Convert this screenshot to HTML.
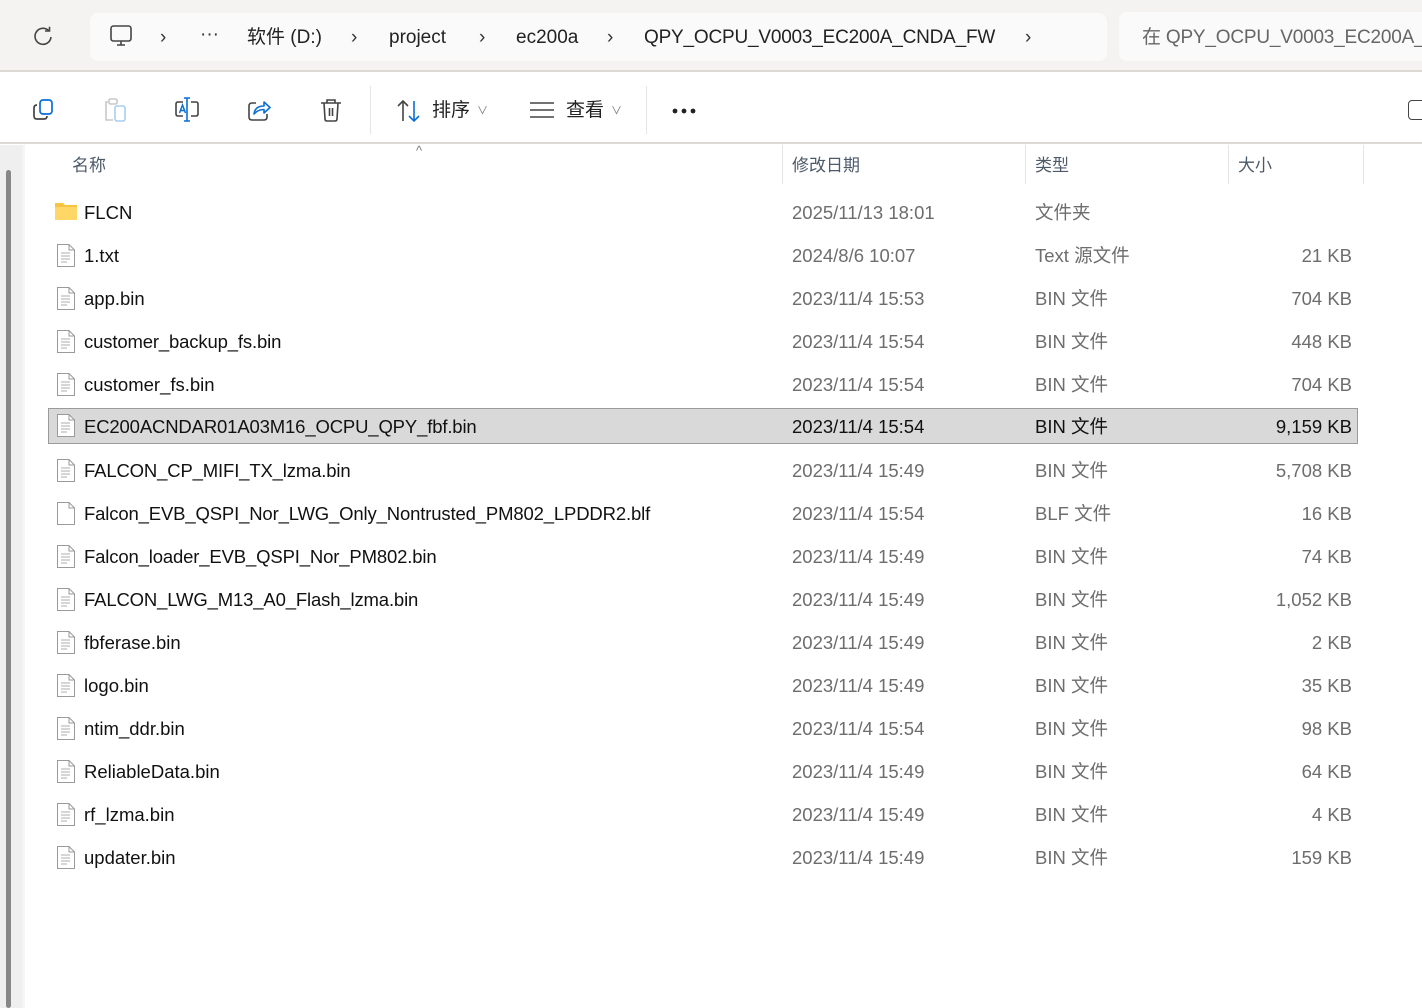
<!DOCTYPE html>
<html><head><meta charset="utf-8"><style>
*{margin:0;padding:0;box-sizing:border-box}
body{width:1422px;height:1008px;overflow:hidden;background:#fff;font-family:"Liberation Sans","Noto Sans CJK SC",sans-serif;position:relative;color:#1a1a1a}
.abs{position:absolute}
#top{left:0;top:0;width:1422px;height:72px;background:#f4f3f2;border-bottom:2px solid #dcd8d4}
#crumb{left:90px;top:13px;width:1017px;height:48px;background:#fafafa;border-radius:8px}
#search{left:1119px;top:12px;width:320px;height:49px;background:#fafafa;border-radius:8px}
.t{position:absolute;white-space:nowrap;font-size:19px;line-height:24px}
#tb{left:0;top:74px;width:1422px;height:70px;background:#fff;border-bottom:2px solid #dcd8d4}
.sep{position:absolute;width:1px;background:#e5e5e5}
#left{left:0;top:145px;width:22px;height:863px;background:#efefef}
#sb{left:6px;top:170px;width:5px;height:838px;background:#878787;border-radius:3px}
#left2{left:22px;top:145px;width:3px;height:863px;background:#f5f5f5}
.hd{position:absolute;top:155px;font-size:17px;color:#4c5a6a;line-height:22px}
.cd{position:absolute;top:145px;height:39px;width:1px;background:#e5e5e5}
.row{position:absolute;left:48px;width:1310px;height:36px}
.row span{position:absolute;top:6px;font-size:18.5px;line-height:24px;white-space:nowrap}
.n{left:36px;color:#111}
.n.l{letter-spacing:-0.15px}
.d{left:744px;color:#6d6d6d}
.ty{left:987px;color:#6d6d6d}
.s{right:6px;color:#6d6d6d}
.sel{background:#d9d9d9;border:1px solid #9a9a9a}
.sel span{color:#111!important}
.sel .n{left:35px}.sel .d{left:743px}.sel .ty{left:986px}.sel .s{right:5px}
.fi{position:absolute;left:9px;top:6px}
</style></head><body>
<div id="top" class="abs"></div>
<div id="crumb" class="abs"></div>
<div id="search" class="abs"></div>
<svg class="abs" style="left:32px;top:26px" width="22" height="22" viewBox="0 0 22 22"><path d="M17 5 A8 8 0 1 0 19 11" fill="none" stroke="#444" stroke-width="1.6"/><path d="M13 5 L17.5 5 L17.5 0.8" fill="none" stroke="#444" stroke-width="1.6"/></svg>
<svg class="abs" style="left:109px;top:24px" width="24" height="24" viewBox="0 0 24 24"><rect x="2" y="2" width="20" height="15" rx="2.5" fill="none" stroke="#444" stroke-width="1.6"/><path d="M8 21h8M12 17v4" stroke="#444" stroke-width="1.6"/></svg>
<div class="t" style="left:160px;top:26px;color:#333">›</div>
<div class="t" style="left:200px;top:23px;color:#333">···</div>
<div class="t" style="left:247px;top:26px;color:#222">软件 (D:)</div>
<div class="t" style="left:351px;top:26px;color:#333">›</div>
<div class="t" style="left:389px;top:26px;color:#222">project</div>
<div class="t" style="left:479px;top:26px;color:#333">›</div>
<div class="t" style="left:516px;top:26px;color:#222">ec200a</div>
<div class="t" style="left:607px;top:26px;color:#333">›</div>
<div class="t" style="left:644px;top:26px;color:#222;letter-spacing:-0.2px">QPY_OCPU_V0003_EC200A_CNDA_FW</div>
<div class="t" style="left:1025px;top:26px;color:#333">›</div>
<div class="t" style="left:1142px;top:26px;color:#666;letter-spacing:-0.2px">在 QPY_OCPU_V0003_EC200A_</div>

<div id="tb" class="abs"></div>
<svg class="abs" style="left:31px;top:98px" width="24" height="24" viewBox="0 0 24 24"><rect x="9" y="2" width="12" height="14" rx="3" fill="none" stroke="#0a6fd6" stroke-width="1.7"/><path d="M6 7 Q3 7 3 10 V18 Q3 21 6 21 H13 Q16 21 16 18" fill="none" stroke="#444" stroke-width="1.7"/></svg>
<svg class="abs" style="left:103px;top:97px" width="24" height="26" viewBox="0 0 24 26"><path d="M5 5 H3 V23 H10" fill="none" stroke="#c8c8c8" stroke-width="1.6"/><rect x="6" y="2" width="8" height="5" rx="1.5" fill="none" stroke="#c8c8c8" stroke-width="1.6"/><rect x="12" y="9" width="10" height="15" rx="2" fill="none" stroke="#a9cdf2" stroke-width="1.6"/></svg>
<svg class="abs" style="left:174px;top:97px" width="26" height="26" viewBox="0 0 26 26"><path d="M9 5 H4 Q2 5 2 7 V17 Q2 19 4 19 H9 M17 5 H22 Q24 5 24 7 V17 Q24 19 22 19 H17" fill="none" stroke="#444" stroke-width="1.6"/><path d="M13 1 V24 M10 1 H16 M10 24 H16" stroke="#0a6fd6" stroke-width="1.6"/><path d="M5.5 16 L8.5 8 L11.5 16 M6.5 13.5 H10.5" fill="none" stroke="#0a6fd6" stroke-width="1.5"/></svg>
<svg class="abs" style="left:247px;top:98px" width="26" height="24" viewBox="0 0 26 24"><path d="M9 5 H5 Q2 5 2 8 V19 Q2 22 5 22 H17 Q20 22 20 19 V16" fill="none" stroke="#444" stroke-width="1.6"/><path d="M7 16 Q8 8 17 8 V4 L23 9.5 L17 15 V11.5 Q11 11.5 7 16 Z" fill="none" stroke="#0a6fd6" stroke-width="1.6" stroke-linejoin="round"/></svg>
<svg class="abs" style="left:319px;top:97px" width="24" height="26" viewBox="0 0 24 26"><path d="M2 6 H22 M8 6 V3 H16 V6 M5 6 L6 22 Q6 24 8 24 H16 Q18 24 18 22 L19 6 M10.5 11 V19 M13.5 11 V19" fill="none" stroke="#444" stroke-width="1.6"/></svg>
<div class="sep" style="left:370px;top:86px;height:48px"></div>
<svg class="abs" style="left:396px;top:99px" width="26" height="24" viewBox="0 0 26 24"><path d="M7 22 V2 M2 7 L7 2 L12 7" fill="none" stroke="#444" stroke-width="1.6"/><path d="M18 2 V22 M13 17 L18 22 L23 17" fill="none" stroke="#0a6fd6" stroke-width="1.6"/></svg>
<div class="t" style="left:432px;top:99px;font-size:19px;color:#222">排序</div>
<div class="t" style="left:477px;top:99px;font-size:11px;color:#777">∨</div>
<svg class="abs" style="left:529px;top:101px" width="26" height="18" viewBox="0 0 26 18"><path d="M1 2 H25 M1 9 H25 M1 16 H25" stroke="#444" stroke-width="1.6"/></svg>
<div class="t" style="left:566px;top:99px;font-size:19px;color:#222">查看</div>
<div class="t" style="left:611px;top:99px;font-size:11px;color:#777">∨</div>
<div class="sep" style="left:646px;top:86px;height:48px"></div>
<svg class="abs" style="left:671px;top:107px" width="28" height="8" viewBox="0 0 28 8"><circle cx="4" cy="4" r="2.4" fill="#222"/><circle cx="13" cy="4" r="2.4" fill="#222"/><circle cx="22" cy="4" r="2.4" fill="#222"/></svg>
<div class="abs" style="left:1408px;top:100px;width:20px;height:20px;border:1.6px solid #444;border-radius:4px"></div>

<div id="left" class="abs"></div>
<div id="sb" class="abs"></div>
<div id="left2" class="abs"></div>
<div class="t" style="left:416px;top:139px;font-size:13px;color:#777">^</div>
<div class="hd" style="left:72px">名称</div>
<div class="cd" style="left:782px"></div>
<div class="hd" style="left:792px">修改日期</div>
<div class="cd" style="left:1025px"></div>
<div class="hd" style="left:1035px">类型</div>
<div class="cd" style="left:1228px"></div>
<div class="hd" style="left:1238px">大小</div>
<div class="cd" style="left:1363px"></div>

<div class="row" style="top:195px"><svg class="fi" style="top:6px;left:6px" width="24" height="20" viewBox="0 0 24 20"><path d="M1 2 H9 L11 4 H23 V19 H1 Z" fill="#f6c342"/><path d="M1 6 H23 V19 H1 Z" fill="#ffd767"/></svg><span class="n">FLCN</span><span class="d">2025/11/13 18:01</span><span class="ty">文件夹</span></div>

<div id="rows"></div>
<script>
const data=[
["1.txt","2024/8/6 10:07","Text 源文件","21 KB"],
["app.bin","2023/11/4 15:53","BIN 文件","704 KB"],
["customer_backup_fs.bin","2023/11/4 15:54","BIN 文件","448 KB"],
["customer_fs.bin","2023/11/4 15:54","BIN 文件","704 KB"],
["EC200ACNDAR01A03M16_OCPU_QPY_fbf.bin","2023/11/4 15:54","BIN 文件","9,159 KB",1],
["FALCON_CP_MIFI_TX_lzma.bin","2023/11/4 15:49","BIN 文件","5,708 KB"],
["Falcon_EVB_QSPI_Nor_LWG_Only_Nontrusted_PM802_LPDDR2.blf","2023/11/4 15:54","BLF 文件","16 KB",0,1],
["Falcon_loader_EVB_QSPI_Nor_PM802.bin","2023/11/4 15:49","BIN 文件","74 KB"],
["FALCON_LWG_M13_A0_Flash_lzma.bin","2023/11/4 15:49","BIN 文件","1,052 KB"],
["fbferase.bin","2023/11/4 15:49","BIN 文件","2 KB"],
["logo.bin","2023/11/4 15:49","BIN 文件","35 KB"],
["ntim_ddr.bin","2023/11/4 15:54","BIN 文件","98 KB"],
["ReliableData.bin","2023/11/4 15:49","BIN 文件","64 KB"],
["rf_lzma.bin","2023/11/4 15:49","BIN 文件","4 KB"],
["updater.bin","2023/11/4 15:49","BIN 文件","159 KB"]];
let h="";
data.forEach((r,i)=>{const top=238+i*43;
const lines=r[5]?"":'<path d="M4 9H13M4 12H13M4 15H13M4 18H10" stroke="#bdbdbd" stroke-width="1.2"/>';
const cls=r[0].length>20?"n l":"n";
h+=`<div class="row${r[4]?' sel':''}" style="top:${r[4]?top-2:top}px"><svg class="fi" style="top:${r[4]?5:6}px;left:${r[4]?8:9}px" width="18" height="23" viewBox="0 0 18 23"><path d="M0.5 0.5 H12 L17.5 6 V22.5 H0.5 Z" fill="#fff" stroke="#9a9a9a"/><path d="M12 0.5 V6 H17.5" fill="none" stroke="#9a9a9a"/>${lines}</svg><span class="${cls}">${r[0]}</span><span class="d">${r[1]}</span><span class="ty">${r[2]}</span><span class="s">${r[3]}</span></div>`;});
document.getElementById("rows").outerHTML=h;
</script>
</body></html>
